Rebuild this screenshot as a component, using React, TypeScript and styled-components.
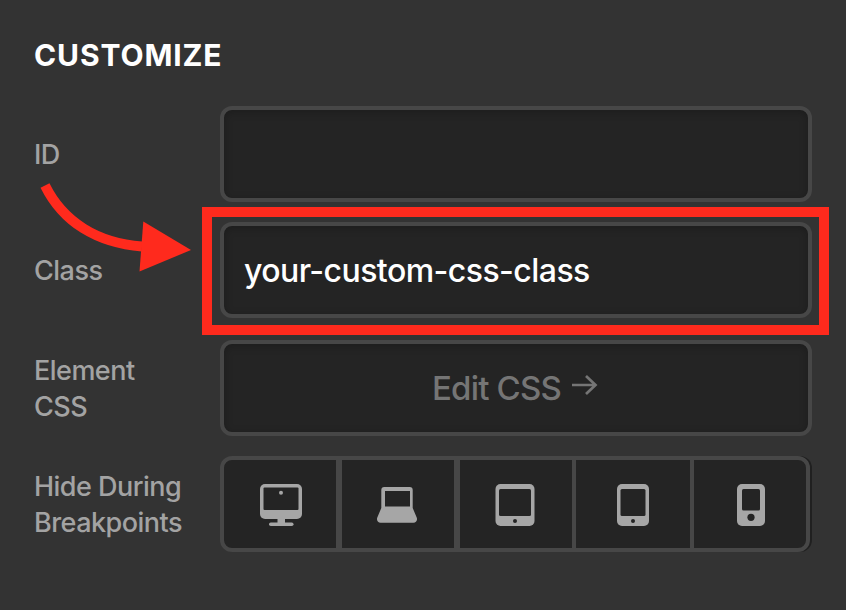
import React from 'react';
import styled, { createGlobalStyle } from 'styled-components';

const GlobalStyle = createGlobalStyle`
  *, *::before, *::after { box-sizing: border-box; }
  html, body { margin: 0; background: #333333; }
  body { font-family: Inter, 'Liberation Sans', sans-serif; overflow: hidden; }
`;

const Panel = styled.main`
  position: relative;
  width: 846px;
  height: 610px;
  padding: 35px 34px 0;
  background: #333333;
`;

const Title = styled.h2`
  margin: 0;
  height: 71px;
  font-size: 30px;
  line-height: 40px;
  font-weight: 700;
  letter-spacing: 0.88px;
  color: #ffffff;
`;

const Row = styled.div<{ $gap?: number }>`
  display: grid;
  grid-template-columns: 186px 592px;
  align-items: center;
  height: 96px;
  margin-bottom: ${(p) => p.$gap ?? 20}px;
`;

const Label = styled.label`
  padding-top: 2px;
  font-size: 27px;
  line-height: 36px;
  font-weight: 450;
  letter-spacing: -0.52px;
  color: #a3a3a3;
  white-space: nowrap;
`;

const Field = styled.div`
  display: flex;
  align-items: center;
  height: 96px;
  padding: 0 20px;
  border: 4px solid #474747;
  border-radius: 12px;
  background: #242424;
  box-shadow: inset 0 2px 8px rgba(0, 0, 0, 0.22);
`;

const Value = styled.span`
  padding-top: 2px;
  font-size: 32px;
  line-height: 40px;
  font-weight: 500;
  letter-spacing: -0.55px;
  color: #ffffff;
`;

const EditButton = styled(Field).attrs({ as: 'button' })`
  justify-content: center;
  width: 100%;
  padding-right: 22px;
  font: 450 33px/40px Inter, 'Liberation Sans', sans-serif;
  letter-spacing: -0.8px;
  color: #757575;
`;

const ArrowIcon = styled.svg`
  display: block;
  margin: -7px 0 0 11px;
`;

const Segments = styled.div`
  display: grid;
  grid-template-columns: 118px 118px 116px 118px 112px;
  width: 590px;
  height: 96px;
  border: 4px solid #474747;
  border-radius: 12px;
  background: #242424;
  box-shadow: 2px 0 0 #202020;
`;

const Segment = styled.button<{ $divider: number; $left?: number; $right?: number }>`
  display: flex;
  align-items: center;
  justify-content: center;
  padding: 2px ${(p) => p.$right ?? 0}px 0 ${(p) => p.$left ?? 0}px;
  border: 0;
  border-right: ${(p) => p.$divider}px solid #474747;
  background: transparent;
  color: #a6a6a6;
`;

const Highlight = styled.div`
  position: absolute;
  left: 202px;
  top: 207px;
  width: 627px;
  height: 128px;
  border: 10px solid #ff2a1d;
  pointer-events: none;
`;

const Pointer = styled.svg`
  position: absolute;
  left: 30px;
  top: 175px;
  pointer-events: none;
`;

const hole = '#242424';

const Desktop = () => (
  <svg width="42" height="42" viewBox="0 0 42 42" fill="currentColor">
    <rect width="42" height="35" rx="5" />
    <rect x="3.5" y="3.5" width="35" height="22.5" rx="1" fill={hole} />
    <circle cx="21" cy="8.8" r="2" />
    <path d="M17.5 34h7.5v5h-7.5z" />
    <rect x="9" y="38.5" width="24.5" height="3.5" rx="1.75" />
  </svg>
);

const Laptop = () => (
  <svg width="40" height="42" viewBox="0 0 40 42" fill="currentColor">
    <path d="M7.3 3h25.4a3 3 0 0 1 3 3v18l4.1 9.7c.8 2.6-.6 5.1-3.3 5.1h-33C.8 38.8-.6 36.3.2 33.7L4.3 24V6a3 3 0 0 1 3-3z" />
    <rect x="8" y="7" width="25" height="15.5" fill={hole} />
  </svg>
);

const TabletWide = () => (
  <svg width="40" height="42" viewBox="0 0 40 42" fill="currentColor">
    <rect x="0.5" width="39" height="42" rx="5" />
    <rect x="4" y="5" width="32" height="27" rx="1.5" fill={hole} />
    <circle cx="20" cy="37" r="2" fill={hole} />
  </svg>
);

const Tablet = () => (
  <svg width="32" height="42" viewBox="0 0 32 42" fill="currentColor">
    <rect width="32" height="42" rx="5" />
    <rect x="3.5" y="5" width="25" height="27" rx="1.5" fill={hole} />
    <circle cx="16" cy="37" r="2" fill={hole} />
  </svg>
);

const Phone = () => (
  <svg width="28" height="42" viewBox="0 0 28 42" fill="currentColor">
    <rect width="28" height="42" rx="5" />
    <rect x="5" y="5" width="18" height="21.5" rx="1.5" fill={hole} />
    <circle cx="14" cy="33.3" r="3.6" fill={hole} />
  </svg>
);

const breakpoints = [
  { name: 'Desktop', Icon: Desktop, divider: 6, left: 2 },
  { name: 'Laptop', Icon: Laptop, divider: 6, right: 2 },
  { name: 'Large tablet', Icon: TabletWide, divider: 4, right: 2 },
  { name: 'Small tablet', Icon: Tablet, divider: 4 },
  { name: 'Phone', Icon: Phone, divider: 0, left: 2 },
];

export default function App() {
  return (
    <>
      <GlobalStyle />
      <Panel>
        <Title>CUSTOMIZE</Title>
        <Row>
          <Label>ID</Label>
          <Field />
        </Row>
        <Row $gap={22}>
          <Label>Class</Label>
          <Field>
            <Value>your-custom-css-class</Value>
          </Field>
        </Row>
        <Row>
          <Label>
            Element
            <br />
            CSS
          </Label>
          <EditButton>
            Edit CSS
            <ArrowIcon width="26" height="20" viewBox="0 0 26 20" fill="none" stroke="currentColor" strokeWidth="2.7">
              <path d="M0 10h23.5M14 1l9.5 9-9.5 9" />
            </ArrowIcon>
          </EditButton>
        </Row>
        <Row>
          <Label>
            Hide During
            <br />
            Breakpoints
          </Label>
          <Segments>
            {breakpoints.map(({ name, Icon, divider, left, right }) => (
              <Segment key={name} $divider={divider} $left={left} $right={right} aria-label={name}>
                <Icon />
              </Segment>
            ))}
          </Segments>
        </Row>
        <Highlight />
        <Pointer width="165" height="100" viewBox="0 0 165 100">
          <path d="M15 10.5C33 47 67 68 112 71.5" fill="none" stroke="#ff2a1d" strokeWidth="10" />
          <path d="M113.3 46.5L161 75L109.5 96.5z" fill="#ff2a1d" />
        </Pointer>
      </Panel>
    </>
  );
}
